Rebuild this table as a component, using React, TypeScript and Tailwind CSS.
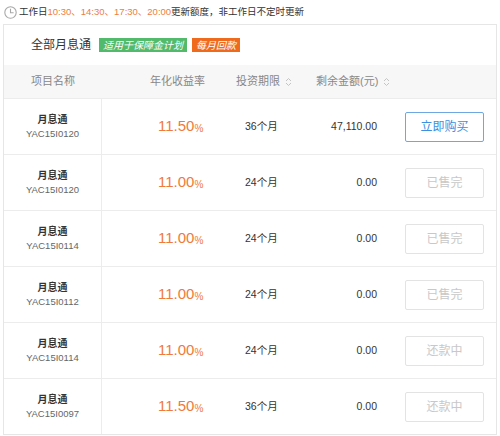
const rows = [
  { code: "YAC15I0120", rate: "11.50", term: "36个月", left: "47,110.00", status: "buy" },
  { code: "YAC15I0120", rate: "11.00", term: "24个月", left: "0.00", status: "已售完" },
  { code: "YAC15I0114", rate: "11.00", term: "24个月", left: "0.00", status: "已售完" },
  { code: "YAC15I0112", rate: "11.00", term: "24个月", left: "0.00", status: "已售完" },
  { code: "YAC15I0114", rate: "11.00", term: "24个月", left: "0.00", status: "还款中" },
  { code: "YAC15I0097", rate: "11.50", term: "36个月", left: "0.00", status: "还款中" },
];

function SortIcon() {
  return (
    <svg width="7" height="10" viewBox="0 0 7 10" className="ml-[5px]">
      <path d="M1 4 L3.5 1.5 L6 4" fill="none" stroke="#c4c4c4" strokeWidth="1" />
      <path d="M1 6 L3.5 8.5 L6 6" fill="none" stroke="#c4c4c4" strokeWidth="1" />
    </svg>
  );
}

function Clock() {
  return (
    <svg width="13" height="13" viewBox="0 0 13 13">
      <circle cx="6.5" cy="6.5" r="5.7" fill="none" stroke="#a8a8a8" strokeWidth="1.1" />
      <path d="M6.5 2.8 V6.8 H9.6" fill="none" stroke="#a8a8a8" strokeWidth="1.1" />
    </svg>
  );
}

export default function App() {
  return (
    <div
      className="w-[500px] h-[436px] bg-white overflow-hidden text-[#333]"
      style={{ fontFamily: '"Liberation Sans", "Noto Sans CJK SC", sans-serif' }}
    >
      <div className="h-[24px] flex items-center pl-[4px] gap-[2px] text-[9.5px]">
        <Clock />
        <span>
          工作日<span className="text-[#ee7d3f]">10:30、14:30、17:30、20:00</span>更新额度，非工作日不定时更新
        </span>
      </div>

      <div className="ml-[3px] w-[494px] border border-[#e6e6e6] bg-white">
        <div className="h-[40px] flex items-center pl-[27px]">
          <span className="text-[12px] text-[#333]">全部月息通</span>
          <span className="ml-[8px] h-[14px] px-[4px] flex items-center bg-[#52ba6b] text-white text-[10px] italic">
            适用于保障金计划
          </span>
          <span className="ml-[5px] h-[14px] px-[4px] flex items-center bg-[#f06a1e] text-white text-[10px] italic">
            每月回款
          </span>
        </div>

        <div className="h-[33px] flex items-center bg-[#f7f7f7] text-[11px] text-[#888]">
          <div className="w-[98px] pl-[27px]">项目名称</div>
          <div className="w-[131px] pl-[48px]">年化收益率</div>
          <div className="w-[80px] pl-[3px] flex items-center">
            投资期限
            <SortIcon />
          </div>
          <div className="w-[82px] pl-[3px] flex items-center">
            剩余金额(元)
            <SortIcon />
          </div>
        </div>

        {rows.map((r, i) => (
          <div key={i} className="h-[56px] flex items-stretch border-t border-[#ececec]">
            <div className="w-[98px] border-r border-[#ececec] flex flex-col items-center justify-center">
              <div className="text-[10px] font-bold text-[#333] leading-[14px]">月息通</div>
              <div className="text-[9.5px] text-[#666] leading-[14px]">{r.code}</div>
            </div>
            <div className="w-[131px] pl-[56px] flex items-center">
              <span className="text-[15px] text-[#ef7a3c]">{r.rate}</span>
              <span className="text-[10px] text-[#ef7a3c] mt-[3px]">%</span>
            </div>
            <div className="w-[80px] pl-[12px] flex items-center text-[10.5px]">{r.term}</div>
            <div className="w-[82px] pr-[18px] flex items-center justify-end text-[10.5px]">{r.left}</div>
            <div className="pl-[10px] flex items-center">
              {r.status === "buy" ? (
                <div className="w-[79px] h-[30px] flex items-center justify-center rounded-[2px] border border-[#6ea8e2] text-[#3d8fe0] text-[12px]">
                  立即购买
                </div>
              ) : (
                <div className="w-[79px] h-[30px] flex items-center justify-center rounded-[2px] border border-[#e3e3e3] text-[#c8c8c8] text-[12px]">
                  {r.status}
                </div>
              )}
            </div>
          </div>
        ))}
      </div>
    </div>
  );
}
